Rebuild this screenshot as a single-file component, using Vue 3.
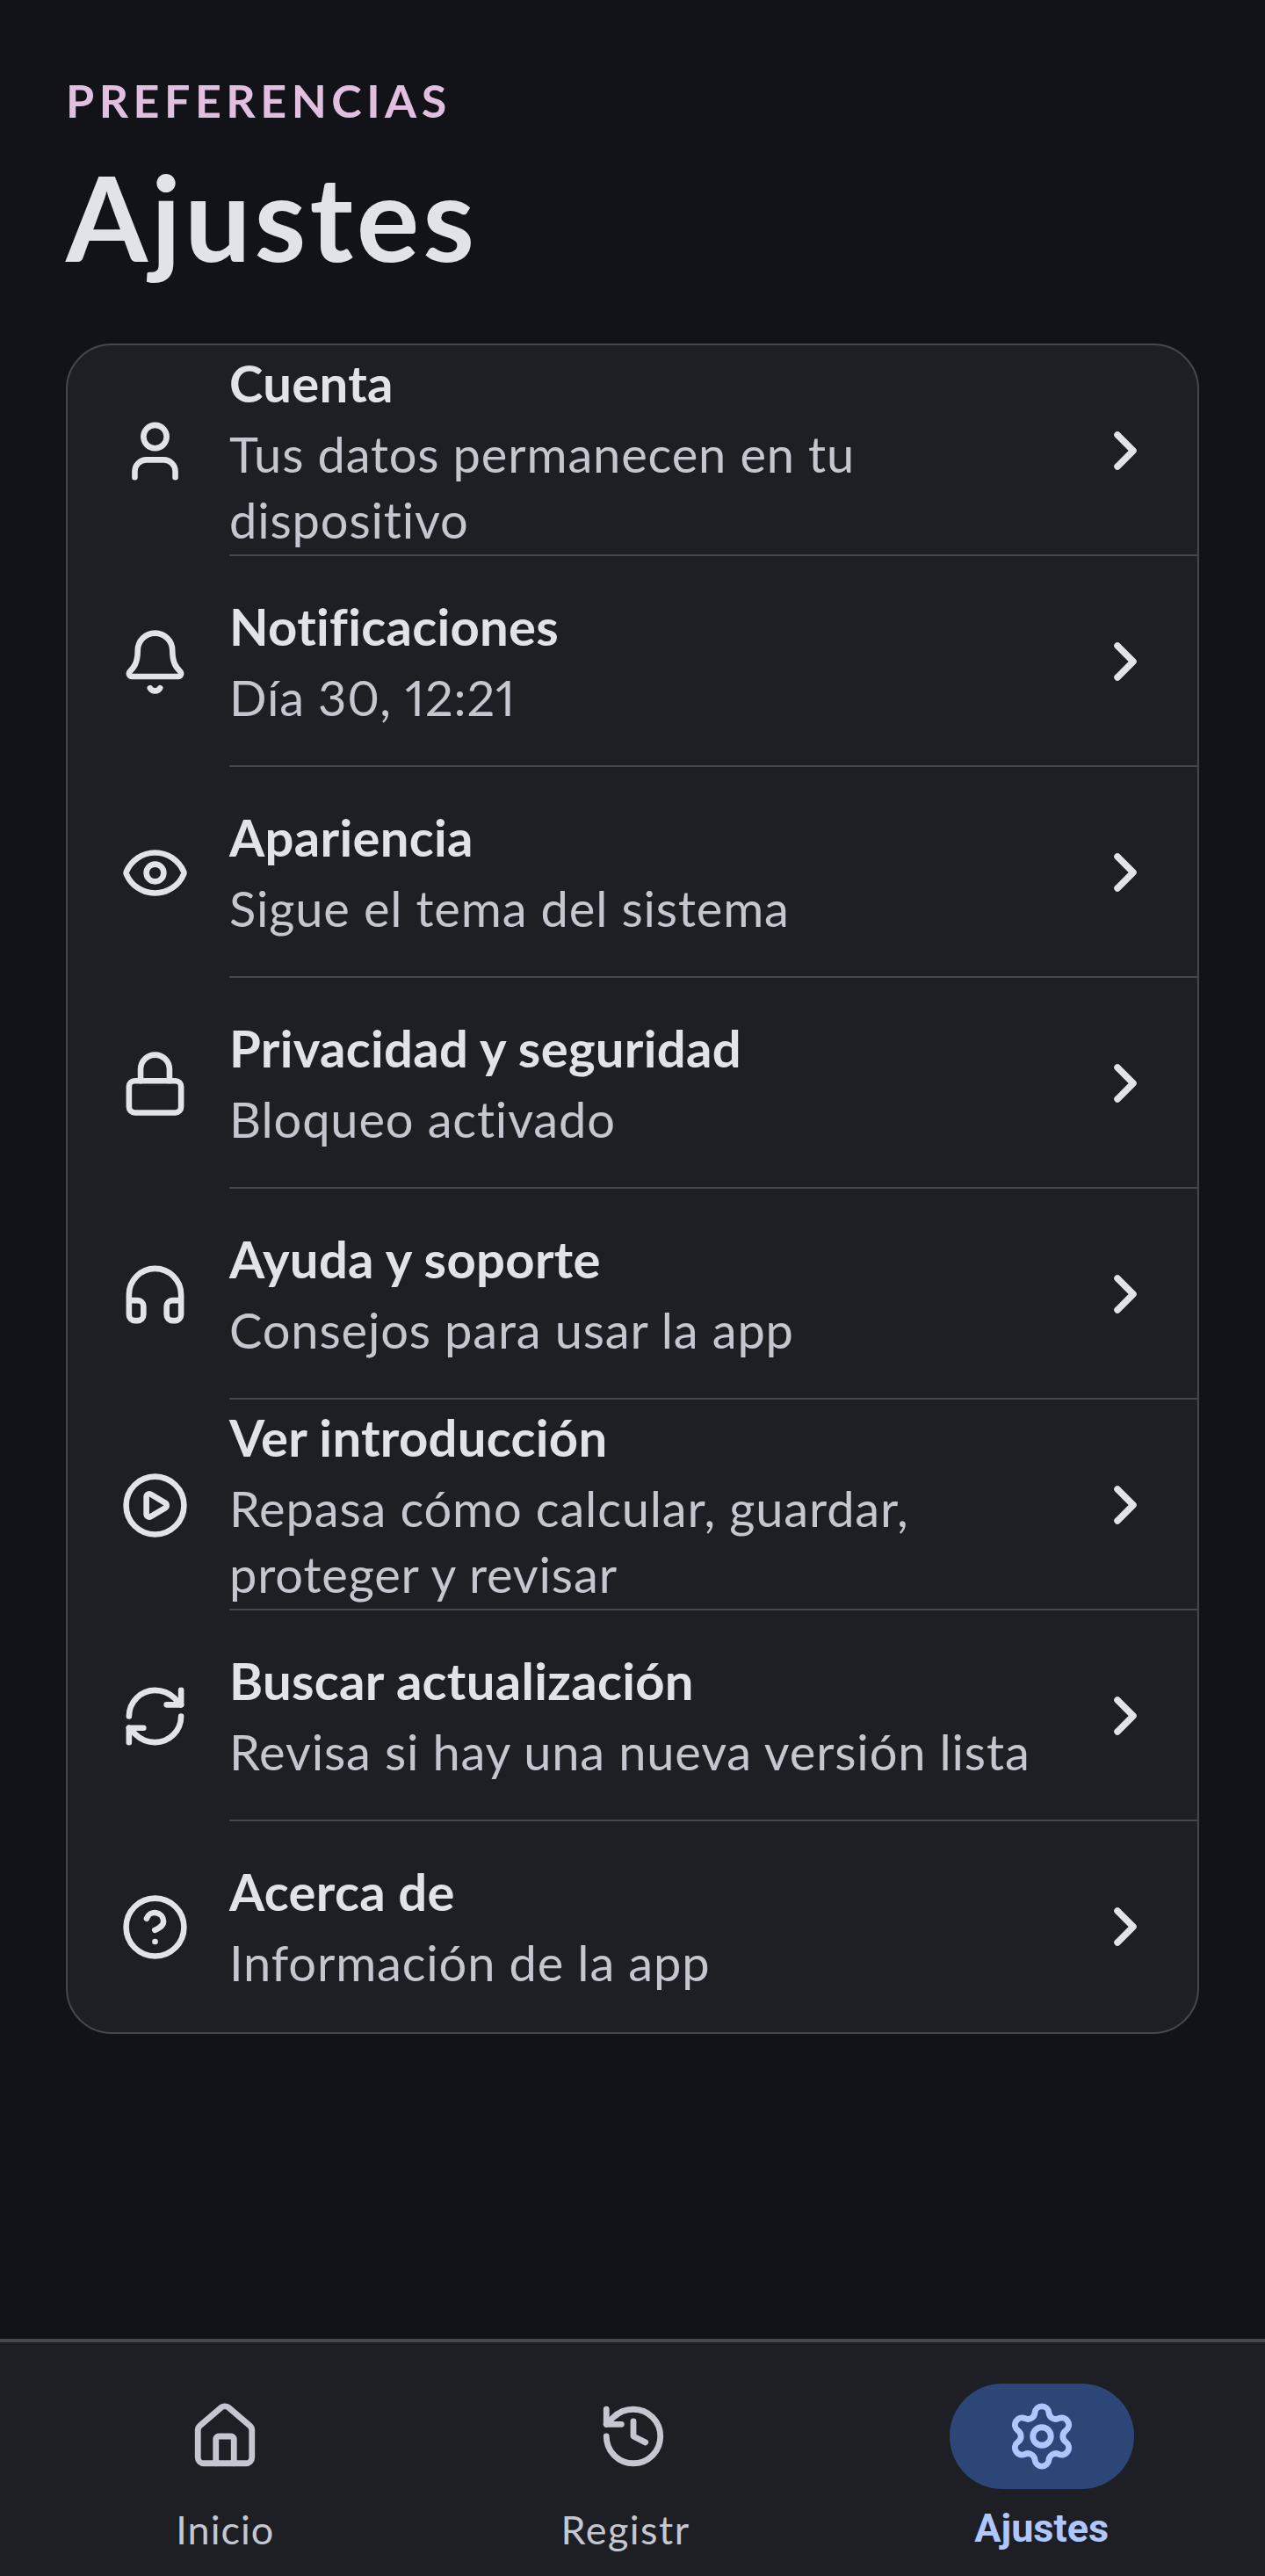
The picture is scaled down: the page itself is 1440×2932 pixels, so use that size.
<template>
  <div class="screen">
    <main class="content">
      <header class="head">
        <div class="head__eyebrow">PREFERENCIAS</div>
        <h1 class="head__title">Ajustes</h1>
      </header>

      <section class="card">
        <div v-for="row in rows" :key="row.title" class="row">
          <svg class="row__icon" viewBox="0 0 24 24" fill="none" stroke="currentColor" stroke-width="2" stroke-linecap="round" stroke-linejoin="round">
            <path v-for="d in row.paths" :key="d" :d="d" />
          </svg>
          <div class="row__body">
            <div class="row__title">{{ row.title }}</div>
            <div class="row__sub">{{ row.sub }}</div>
          </div>
          <svg class="row__chevron" viewBox="0 0 24 24" fill="none" stroke="currentColor" stroke-width="2.5" stroke-linecap="round" stroke-linejoin="round">
            <path d="M9 6l6 6-6 6" />
          </svg>
        </div>
      </section>
    </main>

    <nav class="nav">
      <div v-for="tab in tabs" :key="tab.label" class="tab" :class="{ 'tab--on': tab.active, 'tab--cut': tab.cut }">
        <div class="tab__pill">
          <svg viewBox="0 0 24 24" fill="none" stroke="currentColor" stroke-width="2" stroke-linecap="round" stroke-linejoin="round">
            <path v-for="d in tab.paths" :key="d" :d="d" />
          </svg>
        </div>
        <div class="tab__label">{{ tab.label }}</div>
      </div>
    </nav>
  </div>
</template>

<script setup>
const circle = 'M12 2a10 10 0 1 0 0 20 10 10 0 0 0 0-20z'
const dot = 'M12 9a3 3 0 1 0 0 6 3 3 0 0 0 0-6z'

const rows = [
  {
    title: 'Cuenta',
    sub: 'Tus datos permanecen en tu dispositivo',
    paths: ['M19 21v-2a4 4 0 0 0-4-4H9a4 4 0 0 0-4 4v2', 'M12 3a4 4 0 1 0 0 8 4 4 0 0 0 0-8z'],
  },
  {
    title: 'Notificaciones',
    sub: 'Día 30, 12:21',
    paths: [
      'M10.268 21a2 2 0 0 0 3.464 0',
      'M3.262 15.326A1 1 0 0 0 4 17h16a1 1 0 0 0 .74-1.673C19.41 13.956 18 12.499 18 8A6 6 0 0 0 6 8c0 4.499-1.411 5.956-2.738 7.326',
    ],
  },
  {
    title: 'Apariencia',
    sub: 'Sigue el tema del sistema',
    paths: [
      'M2.062 12.348a1 1 0 0 1 0-.696 10.75 10.75 0 0 1 19.876 0 1 1 0 0 1 0 .696 10.75 10.75 0 0 1-19.876 0',
      dot,
    ],
  },
  {
    title: 'Privacidad y seguridad',
    sub: 'Bloqueo activado',
    paths: ['M5 11h14a2 2 0 0 1 2 2v7a2 2 0 0 1-2 2H5a2 2 0 0 1-2-2v-7a2 2 0 0 1 2-2z', 'M7 11V7a5 5 0 0 1 10 0v4'],
  },
  {
    title: 'Ayuda y soporte',
    sub: 'Consejos para usar la app',
    paths: ['M3 14h3a2 2 0 0 1 2 2v3a2 2 0 0 1-2 2H5a2 2 0 0 1-2-2v-7a9 9 0 0 1 18 0v7a2 2 0 0 1-2 2h-1a2 2 0 0 1-2-2v-3a2 2 0 0 1 2-2h3'],
  },
  {
    title: 'Ver introducción',
    sub: 'Repasa cómo calcular, guardar, proteger y revisar',
    paths: [circle, 'M9 9.003a1 1 0 0 1 1.517-.859l4.997 2.997a1 1 0 0 1 0 1.718l-4.997 2.997A1 1 0 0 1 9 14.996z'],
  },
  {
    title: 'Buscar actualización',
    sub: 'Revisa si hay una nueva versión lista',
    paths: [
      'M3 12a9 9 0 0 1 9-9 9.75 9.75 0 0 1 6.74 2.74L21 8',
      'M21 3v5h-5',
      'M21 12a9 9 0 0 1-9 9 9.75 9.75 0 0 1-6.74-2.74L3 16',
      'M8 16H3v5',
    ],
  },
  {
    title: 'Acerca de',
    sub: 'Información de la app',
    paths: [circle, 'M9.09 9a3 3 0 0 1 5.83 1c0 2-3 3-3 3', 'M12 17h.01'],
  },
]

const tabs = [
  {
    label: 'Inicio',
    paths: [
      'M15 21v-8a1 1 0 0 0-1-1h-4a1 1 0 0 0-1 1v8',
      'M3 10a2 2 0 0 1 .709-1.528l7-5.999a2 2 0 0 1 2.582 0l7 5.999A2 2 0 0 1 21 10v9a2 2 0 0 1-2 2H5a2 2 0 0 1-2-2z',
    ],
  },
  {
    label: 'Registr',
    cut: true,
    paths: ['M3 12a9 9 0 1 0 9-9 9.75 9.75 0 0 0-6.74 2.74L3 8', 'M3 3v5h5', 'M12 7v5l4 2'],
  },
  {
    label: 'Ajustes',
    active: true,
    paths: [
      'M9.671 4.136a2.34 2.34 0 0 1 4.659 0 2.34 2.34 0 0 0 3.319 1.915 2.34 2.34 0 0 1 2.33 4.033 2.34 2.34 0 0 0 0 3.831 2.34 2.34 0 0 1-2.33 4.033 2.34 2.34 0 0 0-3.319 1.915 2.34 2.34 0 0 1-4.659 0 2.34 2.34 0 0 0-3.32-1.915 2.34 2.34 0 0 1-2.33-4.033 2.34 2.34 0 0 0 0-3.831A2.34 2.34 0 0 1 6.35 6.051a2.34 2.34 0 0 0 3.319-1.915',
      dot,
    ],
  },
]
</script>

<style scoped>
.screen {
  width: 1440px;
  height: 2932px;
  display: flex;
  flex-direction: column;
  background: #111318;
  font-family: "Lato", "Noto Sans", sans-serif;
  font-variant-ligatures: none;
  font-variant-numeric: proportional-nums;
}

.content {
  flex: 1;
  padding: 91px 75px 0;
}

.head__eyebrow {
  height: 46px;
  line-height: 46px;
  font-size: 52px;
  font-weight: 700;
  letter-spacing: 5.5px;
  color: #e2bfdf;
}

.head__title {
  margin: 40px 0 0;
  height: 140px;
  line-height: 140px;
  font-size: 134px;
  font-weight: 700;
  letter-spacing: 4px;
  color: #e2e2e9;
}

.card {
  margin-top: 74px;
  background: #1e1f25;
  border: 2px solid #44474f;
  border-radius: 52px;
  overflow: hidden;
}

.row {
  position: relative;
  height: 240px;
  display: flex;
  align-items: center;
  padding: 0 46px 0 60px;
  color: #e2e2e9;
}

.row:not(:last-child)::after {
  content: "";
  position: absolute;
  bottom: 0;
  left: 184px;
  right: 0;
  height: 2px;
  background: #44474f;
}

.row__icon {
  flex: none;
  width: 79px;
  height: 79px;
  margin-right: 45px;
}

.row__body {
  flex: 1;
  min-width: 0;
  padding-right: 30px;
}

.row__title {
  margin-bottom: 6px;
  font-size: 58px;
  line-height: 75px;
  font-weight: 700;
  letter-spacing: 0.3px;
  color: #e2e2e9;
}

.row__sub {
  font-size: 56px;
  line-height: 75px;
  letter-spacing: 0.85px;
  color: #c4c6d0;
}

.row__chevron {
  flex: none;
  width: 72px;
  height: 72px;
}

.nav {
  flex: none;
  box-sizing: border-box;
  height: 270px;
  display: flex;
  padding: 0 22px 0 24px;
  border-top: 4px solid #44474f;
  background: #1e1f25;
}

.tab {
  flex: 1;
  display: flex;
  flex-direction: column;
  align-items: center;
  padding-top: 47px;
  color: #c4c6d0;
}

.tab__pill {
  width: 210px;
  height: 120px;
  display: flex;
  align-items: center;
  justify-content: center;
  border-radius: 60px;
}

.tab__pill svg {
  display: block;
  width: 82px;
  height: 82px;
}

.tab__label {
  margin-top: 16px;
  font-size: 45px;
  line-height: 60px;
  letter-spacing: 1px;
}

.tab--cut .tab__label {
  padding-right: 18px;
  letter-spacing: 1.5px;
}

.tab--on {
  color: #afc6ff;
}

.tab--on .tab__pill {
  background: #2d4678;
}

.tab--on .tab__label {
  margin-top: 15px;
  font-family: "Roboto", sans-serif;
  font-weight: 700;
  letter-spacing: 0;
}
</style>

<style>
html,
body {
  margin: 0;
  background: #111318;
}
</style>
